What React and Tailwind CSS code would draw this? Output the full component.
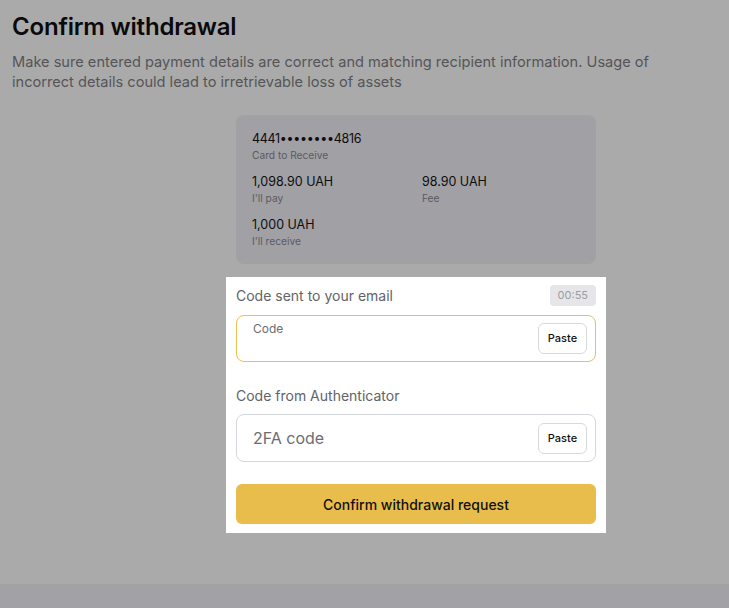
export default function App() {
  return (
    <div className="min-h-[608px] w-full flex flex-col bg-[#aaaaaa]" style={{ fontFamily: 'Inter, "Noto Sans", sans-serif' }}>
      <div className="flex-1 px-3 pt-[11px]">
        <h1 className="text-[24px] leading-[32px] font-semibold text-[#0a0a0a] tracking-[-0.2px]">Confirm withdrawal</h1>
        <p className="mt-[9px] text-[14.6px] leading-[20px] text-[#555558] max-w-[640px]">
          Make sure entered payment details are correct and matching recipient information. Usage of incorrect details could lead to irretrievable loss of assets
        </p>
        <div className="ml-[224px] w-[360px] mt-[23px]">
          <div className="rounded-lg bg-[#a1a0a5] px-4 pt-[15px] pb-[16px]">
            <div className="text-[12.5px] leading-[18px] text-[#0d0d0f] tracking-[-0.3px]">4441••••••••4816</div>
            <div className="text-[10.2px] leading-[14px] text-[#5b5a60]">Card to Receive</div>
            <div className="grid grid-cols-[170px_1fr] mt-[11px] gap-y-[11px]">
              <div>
                <div className="text-[12.5px] leading-[18px] text-[#0d0d0f]">1,098.90 UAH</div>
                <div className="text-[10.2px] leading-[14px] text-[#5b5a60]">I'll pay</div>
              </div>
              <div>
                <div className="text-[12.5px] leading-[18px] text-[#0d0d0f]">98.90 UAH</div>
                <div className="text-[10.2px] leading-[14px] text-[#5b5a60]">Fee</div>
              </div>
              <div>
                <div className="text-[12.5px] leading-[18px] text-[#0d0d0f]">1,000 UAH</div>
                <div className="text-[10.2px] leading-[14px] text-[#5b5a60]">I'll receive</div>
              </div>
            </div>
          </div>
          <div className="-mx-[10px] mt-[13px] bg-white px-[10px] pt-[8px] pb-[9px]">
            <div className="flex items-center justify-between h-[21px]">
              <span className="text-[14px] text-[#616369]">Code sent to your email</span>
              <span className="h-[21px] px-[8px] rounded-[4px] bg-[#e6e6ea] text-[11px] leading-[21px] text-[#9a9ca3]">00:55</span>
            </div>
            <div className="mt-[9px] h-[47px] rounded-lg border border-[#ecc04f] flex items-start justify-between pl-[16px] pr-[8px]">
              <span className="mt-[5px] text-[12px] leading-[16px] text-[#6b6d73]">Code</span>
              <button className="mt-[7px] h-[31px] w-[49px] rounded-md border border-[#d8d9de] bg-white text-[11px] font-medium text-[#111]">Paste</button>
            </div>
            <div className="mt-[24px] text-[14px] leading-[20px] text-[#616369]">Code from Authenticator</div>
            <div className="mt-[8px] h-[48px] rounded-lg border border-[#d6d7dc] flex items-center justify-between pl-[16px] pr-[8px]">
              <span className="text-[16px] text-[#6b6d73]">2FA code</span>
              <button className="h-[31px] w-[49px] rounded-md border border-[#d8d9de] bg-white text-[11px] font-medium text-[#111]">Paste</button>
            </div>
            <button className="mt-[22px] w-full h-[40px] rounded-md bg-[#e9bd4b] text-[14px] font-medium text-[#111]">Confirm withdrawal request</button>
          </div>
        </div>
      </div>
      <div className="h-[24px] bg-[#a2a1a6]"></div>
    </div>
  );
}
